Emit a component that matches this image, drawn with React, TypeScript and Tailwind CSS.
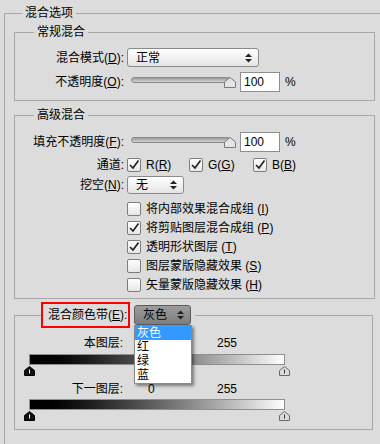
import React from "react";

function Arrows() {
  return (
    <svg width="7" height="10" viewBox="0 0 7 10" className="shrink-0">
      <polygon points="0,4 3.5,0.5 7,4" fill="#222" />
      <polygon points="0,6 3.5,9.5 7,6" fill="#222" />
    </svg>
  );
}

function Select({ label, className }: { label: string; className: string }) {
  return (
    <div
      className={`flex items-center justify-between rounded-[3px] border border-[#8a8a8a] bg-gradient-to-b from-[#ffffff] to-[#e4e4e4] pl-[8px] pr-[6px] ${className}`}
    >
      <span>{label}</span>
      <Arrows />
    </div>
  );
}

function Checkbox({ checked }: { checked?: boolean }) {
  return (
    <div className="flex h-[14px] w-[14px] shrink-0 items-center justify-center rounded-[2px] border border-[#7d7d7d] bg-gradient-to-b from-[#ffffff] to-[#e6e6e6]">
      {checked && (
        <svg width="12" height="12" viewBox="0 0 12 12">
          <path d="M2 6 L5 9 L10.5 1.5" fill="none" stroke="#1e1e1e" strokeWidth="1.6" />
        </svg>
      )}
    </div>
  );
}

function OpacitySlider() {
  return (
    <div className="relative ml-[7px] h-[11px] w-[105px]">
      <div className="absolute left-0 top-0 h-[6px] w-[100px] rounded-full border border-[#8a8a8a] bg-gradient-to-b from-[#9c9c9c] to-[#d2d2d2]" />
      <svg width="12" height="11" viewBox="0 0 12 11" className="absolute right-0 top-0">
        <path d="M6 0.5 L11.5 5 V10.5 H0.5 V5 Z" fill="#e4e4e4" stroke="#7a7a7a" />
      </svg>
    </div>
  );
}

function Marker({ dark }: { dark?: boolean }) {
  return (
    <svg width="11" height="10" viewBox="0 0 11 10" className="shrink-0">
      <path
        d="M5.5 0.5 L10.5 4.5 V9.5 H0.5 V4.5 Z"
        fill={dark ? "#111" : "#dadada"}
        stroke={dark ? "#000" : "#6a6a6a"}
      />
      <line x1="5.5" y1="3.5" x2="5.5" y2="7.5" stroke={dark ? "#fff" : "#333"} strokeWidth="1" />
    </svg>
  );
}

function Key({ k }: { k: string }) {
  return (
    <>
      (<span className="underline underline-offset-1">{k}</span>)
    </>
  );
}

function Percent() {
  return (
    <>
      <div className="ml-[4px] flex h-[20px] w-[40px] items-center border border-[#8e8e8e] bg-white pl-[3px]">100</div>
      <span className="ml-[5px]">%</span>
    </>
  );
}

const options = [
  { text: "将内部效果混合成组", k: "I", checked: false },
  { text: "将剪贴图层混合成组", k: "P", checked: true },
  { text: "透明形状图层", k: "T", checked: true },
  { text: "图层蒙版隐藏效果", k: "S", checked: false },
  { text: "矢量蒙版隐藏效果", k: "H", checked: false },
];

export default function App() {
  return (
    <div className="h-[444px] w-[380px] overflow-hidden bg-[#dcdcdc] pl-[4px] pt-[5px] font-['Liberation_Sans','Noto_Sans_CJK_SC',sans-serif] text-[12px] text-black">
      <fieldset className="h-[470px] w-[400px] border-l border-t border-[#a8a8a8]">
        <legend className="ml-[17px] px-[3px] leading-[16px]">混合选项</legend>

        <div className="ml-[9px] flex flex-col">
          {/* 常规混合 */}
          <fieldset className="mt-[3px] w-[361px] border border-[#a8a8a8]">
            <legend className="ml-[19px] px-[3px] leading-[16px]">常规混合</legend>
            <div className="flex flex-col gap-[5px] pb-[8px] pt-[8px]">
              <div className="flex h-[19px] items-center">
                <span className="w-[109px] text-right">
                  混合模式<Key k="D" />:
                </span>
                <Select label="正常" className="ml-[3px] h-[19px] w-[132px]" />
              </div>
              <div className="flex h-[20px] items-center">
                <span className="w-[109px] text-right">
                  不透明度<Key k="O" />:
                </span>
                <OpacitySlider />
                <Percent />
              </div>
            </div>
          </fieldset>

          {/* 高级混合 */}
          <fieldset className="mt-[6px] w-[361px] border border-[#a8a8a8]">
            <legend className="ml-[19px] px-[3px] leading-[16px]">高级混合</legend>
            <div className="flex flex-col pb-[4px] pt-[9px]">
              <div className="flex h-[20px] items-center">
                <span className="w-[109px] text-right">
                  填充不透明度<Key k="F" />:
                </span>
                <OpacitySlider />
                <Percent />
              </div>
              <div className="mt-[5px] flex h-[16px] items-center">
                <span className="w-[109px] text-right">通道:</span>
                <div className="ml-[3px] flex w-[62px] items-center gap-[5px]">
                  <Checkbox checked />
                  <span>
                    R<Key k="R" />
                  </span>
                </div>
                <div className="flex w-[64px] items-center gap-[5px]">
                  <Checkbox checked />
                  <span>
                    G<Key k="G" />
                  </span>
                </div>
                <div className="flex items-center gap-[5px]">
                  <Checkbox checked />
                  <span>
                    B<Key k="B" />
                  </span>
                </div>
              </div>
              <div className="mt-[3px] flex h-[18px] items-center">
                <span className="w-[109px] text-right">
                  挖空<Key k="N" />:
                </span>
                <Select label="无" className="ml-[3px] h-[18px] w-[57px]" />
              </div>
              <div className="mt-[5px] flex flex-col">
                {options.map((o) => (
                  <div key={o.k} className="flex h-[19px] items-center gap-[5px] pl-[112px]">
                    <Checkbox checked={o.checked} />
                    <span>
                      {o.text} <Key k={o.k} />
                    </span>
                  </div>
                ))}
              </div>
            </div>
          </fieldset>

          {/* 混合颜色带 */}
          <fieldset className="mt-[3px] w-[359px] border border-[#a8a8a8]">
            <legend className="ml-[26px] pr-[4px]">
              <div className="flex items-center">
                <div className="flex h-[26px] w-[89px] items-center border-2 border-[#ff0000] pl-[5px]">
                  混合颜色带<Key k="E" />:
                </div>
                <div className="relative ml-[4px]">
                  <div className="flex h-[20px] w-[57px] items-center justify-between rounded-[3px] border border-[#5c5c5c] bg-gradient-to-b from-[#9c9c9c] to-[#7e7e7e] pl-[8px] pr-[6px]">
                    <span>灰色</span>
                    <Arrows />
                  </div>
                  <div className="absolute left-0 top-full z-10 flex w-[58px] flex-col border border-[#8a8a8a] bg-white pb-px shadow-[2px_2px_3px_rgba(0,0,0,0.45)]">
                    <div className="h-[14px] bg-[#3399ff] pl-[2px] leading-[14px] text-white">灰色</div>
                    <div className="h-[14px] pl-[2px] leading-[14px]">红</div>
                    <div className="h-[14px] pl-[2px] leading-[14px]">绿</div>
                    <div className="h-[14px] pl-[2px] leading-[14px]">蓝</div>
                  </div>
                </div>
              </div>
            </legend>
            <div className="flex flex-col pb-[8px] pt-[7px]">
              {/* the "0" of this row is covered by the open list */}
              <div className="flex h-[16px] items-center">
                <span className="w-[108px] text-right">本图层:</span>
                <span className="ml-[94px]">255</span>
              </div>
              <div className="ml-[14px] mt-[3px] h-[11px] w-[256px] border border-[#8e8e8e] bg-gradient-to-r from-black to-white" />
              <div className="mt-[1px] flex h-[10px] pl-[9px]">
                <Marker dark />
                <div className="w-[244px]" />
                <Marker />
              </div>
              <div className="mt-[5px] flex h-[16px] items-center">
                <span className="w-[108px] text-right">下一图层:</span>
                <span className="ml-[25px] w-[69px]">0</span>
                <span>255</span>
              </div>
              <div className="ml-[14px] mt-[2px] h-[11px] w-[256px] border border-[#8e8e8e] bg-gradient-to-r from-black to-white" />
              <div className="mt-[1px] flex h-[10px] pl-[9px]">
                <Marker dark />
                <div className="w-[244px]" />
                <Marker />
              </div>
            </div>
          </fieldset>
        </div>
      </fieldset>
    </div>
  );
}
